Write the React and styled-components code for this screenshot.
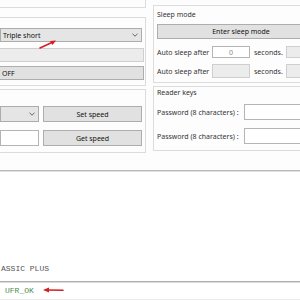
import React from 'react'
import styled, { createGlobalStyle } from 'styled-components'

const Global = createGlobalStyle`
  html, body { margin: 0; padding: 0; background: #fdfdfd; }
  body { font-family: "Noto Sans", "DejaVu Sans", sans-serif; font-size: 7px; color: #222; }
`

const Form = styled.div`
  position: relative;
  width: 300px;
  height: 300px;
  overflow: hidden;
  background: #fdfdfd;
  display: flex;
  flex-direction: column;
`

const Top = styled.div`
  display: grid;
  grid-template-columns: 206px 180px;
  column-gap: 7px;
  margin-left: -60px;
  align-items: start;
`

const Column = styled.div`
  display: flex;
  flex-direction: column;
`

const Group = styled.div`
  border: 1px solid #dcdcdc;
  margin-top: ${p => p.$mt || 0}px;
  padding: ${p => p.$pt || 0}px 0 ${p => p.$pb || 0}px;
  height: ${p => (p.$h ? `${p.$h}px` : 'auto')};
  display: flex;
  flex-direction: column;
`

const Row = styled.div`
  display: flex;
  align-items: center;
  height: ${p => p.$h}px;
  margin-top: ${p => p.$mt || 0}px;
  padding-left: ${p => p.$pl || 0}px;
  gap: ${p => p.$gap || 0}px;
`

const Caption = styled.div`
  height: 10px;
  line-height: 10px;
  padding-left: 3px;
  color: #333;
`

const Label = styled.span`
  color: #333;
  white-space: nowrap;
  width: ${p => (p.$w ? `${p.$w}px` : 'auto')};
  flex: none;
`

const Select = styled.div`
  box-sizing: border-box;
  height: 100%;
  width: ${p => p.$w}px;
  margin-left: ${p => p.$ml || 0}px;
  flex: none;
  background: #e5e5e5;
  border: 1px solid #acacac;
  display: flex;
  align-items: center;
  justify-content: space-between;
  padding: 0 3px 0 2px;
  color: #111;
  svg { flex: none; }
`

const Button = styled.div`
  box-sizing: border-box;
  height: 100%;
  width: ${p => (p.$w ? `${p.$w}px` : 'auto')};
  flex: ${p => (p.$w ? 'none' : '1')};
  margin: 0 ${p => p.$mr || 0}px 0 ${p => p.$ml || 0}px;
  background: #e1e1e1;
  border: 1px solid #adadad;
  display: flex;
  align-items: center;
  justify-content: ${p => (p.$start ? 'flex-start' : 'center')};
  padding-left: ${p => p.$pl || 0}px;
  color: #111;
`

const Input = styled.div`
  box-sizing: border-box;
  height: 100%;
  width: ${p => (p.$w ? `${p.$w}px` : 'auto')};
  flex: ${p => (p.$w ? 'none' : '1')};
  margin: 0 ${p => p.$mr || 0}px 0 ${p => p.$ml || 0}px;
  background: ${p => (p.$disabled ? '#ececec' : '#fff')};
  border: 1px solid ${p => (p.$disabled ? '#cfcfcf' : '#b4b4b4')};
  display: flex;
  align-items: center;
  justify-content: center;
  color: #888;
`

const Log = styled.div`
  margin-top: 17px;
  height: 105px;
  background: #fff;
  border-top: 1px solid #b8b8b8;
  box-shadow: inset 0 1px 0 #e2e2e2;
  display: flex;
  flex-direction: column;
  justify-content: flex-end;
  padding-bottom: 7px;
`

const Mono = styled.div`
  font-family: "Liberation Mono", "DejaVu Sans Mono", monospace;
  font-size: 8px;
  line-height: 10px;
  color: ${p => p.$color || '#555'};
  margin-left: ${p => p.$ml || 0}px;
  white-space: pre;
`

const Status = styled.div`
  height: 17px;
  border-top: 1px solid #b0b0b0;
  box-shadow: inset 0 1px 0 #dadada;
  border-bottom: 1px solid #ececec;
  background: #fff;
  display: flex;
  align-items: center;
  gap: 8px;
  padding-left: 5px;
`

const Arrow = styled.svg`
  position: absolute;
  left: ${p => p.$x}px;
  top: ${p => p.$y}px;
`

const Chevron = () => (
  <svg width="6" height="4" viewBox="0 0 6 4">
    <path d="M0.5 0.8 L3 3.2 L5.5 0.8" fill="none" stroke="#555" strokeWidth="0.9" />
  </svg>
)

export default function App() {
  return (
    <Form>
      <Global />
      <Top>
        <Column>
          <Group $mt={-20} $h={26} />
          <Group $mt={9} $pt={10} $pb={5}>
            <Row $h={14}>
              <Select $w={142} $ml={59}>
                <span>Triple short</span>
                <Chevron />
              </Select>
            </Row>
            <Row $h={14} $mt={6}>
              <Input $disabled $ml={3} $mr={1} />
            </Row>
            <Row $h={14} $mt={4}>
              <Button $ml={3} $mr={1} $start $pl={57}>OFF</Button>
            </Row>
          </Group>
          <Group $mt={3} $pt={16} $pb={6}>
            <Row $h={16}>
              <Select $w={39} $ml={59}>
                <span />
                <Chevron />
              </Select>
              <Button $w={99} $ml={4}>Set speed</Button>
            </Row>
            <Row $h={16} $mt={8}>
              <Input $w={39} $ml={59} />
              <Button $w={99} $ml={4}>Get speed</Button>
            </Row>
          </Group>
        </Column>

        <Column>
          <Group $mt={5} $pt={4} $pb={4}>
            <Caption>Sleep mode</Caption>
            <Row $h={15} $mt={4} $pl={3}>
              <Button $w={168}>Enter sleep mode</Button>
            </Row>
            <Row $h={12} $mt={7} $pl={3} $gap={4}>
              <Label $w={51}>Auto sleep after</Label>
              <Input $w={38}>0</Input>
              <Label $w={28}>seconds.</Label>
              <Input $w={38} $disabled />
            </Row>
            <Row $h={14} $mt={6} $pl={3} $gap={4}>
              <Label $w={51}>Auto sleep after</Label>
              <Input $w={38} $disabled />
              <Label $w={28}>seconds.</Label>
              <Input $w={38} $disabled />
            </Row>
          </Group>
          <Group $mt={3} $pt={1} $pb={6}>
            <Caption>Reader keys</Caption>
            <Row $h={16} $mt={6} $pl={3} $gap={4}>
              <Label $w={83}>Password (8 characters) :</Label>
              <Input $w={80} />
            </Row>
            <Row $h={16} $mt={8} $pl={3} $gap={4}>
              <Label $w={83}>Password (8 characters) :</Label>
              <Input $w={80} />
            </Row>
          </Group>
        </Column>
      </Top>

      <Log>
        <Mono $ml={1}>ASSIC PLUS</Mono>
      </Log>
      <Status>
        <Mono $color="#4f8a4f">UFR_OK</Mono>
      </Status>

      <Arrow $x={38} $y={38} width="20" height="12" viewBox="0 0 20 12">
        <path d="M2 10 L15 4" stroke="#d21f1f" strokeWidth="1.6" strokeLinecap="round" />
        <path d="M18 2.5 L12 3 L14.5 7 Z" fill="#d21f1f" />
      </Arrow>
      <Arrow $x={42} $y={286} width="22" height="8" viewBox="0 0 22 8">
        <path d="M6 4 L21 4.3" stroke="#d21f1f" strokeWidth="1.6" strokeLinecap="round" />
        <path d="M1 4 L7 1.5 L7 6.5 Z" fill="#d21f1f" />
      </Arrow>
    </Form>
  )
}
